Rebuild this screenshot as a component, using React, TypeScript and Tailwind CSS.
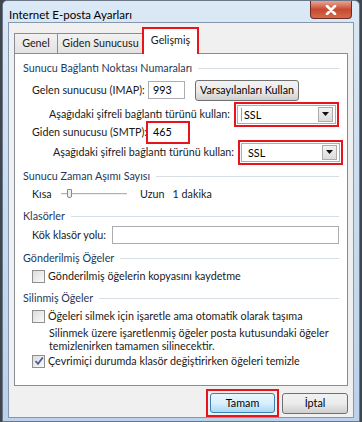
import React from 'react';

const font = "font-['Lato','Open_Sans',sans-serif]";

function Section({ title, children }: { title: string; children?: React.ReactNode }) {
  return (
    <div className="flex flex-col">
      <div className="flex items-center gap-1.5 h-[16px]">
        <span className="text-[#1e395b] whitespace-nowrap">{title}</span>
        <div className="flex-1 h-px bg-[#d5dfe5]" />
      </div>
      {children}
    </div>
  );
}

function Checkbox({ checked = false }: { checked?: boolean }) {
  return (
    <div className="w-[13px] h-[13px] shrink-0 border border-[#8f8f8f] bg-gradient-to-br from-[#dcdcdc] to-[#fbfbfb] flex items-center justify-center">
      {checked && (
        <svg width="10" height="10" viewBox="0 0 10 10">
          <path d="M1.5 5 L4 7.8 L8.8 1.5" fill="none" stroke="#4a5f97" strokeWidth="1.8" />
        </svg>
      )}
    </div>
  );
}

function Select({ value, caret = false }: { value: string; caret?: boolean }) {
  return (
    <div className="border-2 border-[#e8141b] p-[1px]">
      <div className="w-[99px] h-[19px] border border-[#abadb3] bg-white flex items-center justify-between pl-[3px] pr-[2px]">
        <span className={`text-black pl-[2px] leading-[13px] border-l ${caret ? 'border-[#7aa7d6]' : 'border-transparent'}`}>{value}</span>
        <div className="w-[15px] h-[15px] border border-[#acacac] bg-gradient-to-b from-[#f2f2f2] to-[#dcdcdc] flex items-center justify-center">
          <svg width="7" height="4" viewBox="0 0 7 4"><path d="M0 0 H7 L3.5 4 Z" fill="#111" /></svg>
        </div>
      </div>
    </div>
  );
}

export default function App() {
  return (
    <div className={`w-[362px] h-[422px] bg-[#3e4650] pl-[2px] text-[10.75px] text-[#1a1a1a] whitespace-nowrap ${font}`}>
      <div className="w-[358px] h-[422px] border border-[#6b7686] rounded-t-[5px] bg-gradient-to-b from-[#dbe8f5] via-[#c9dbef] to-[#bcd1ea] flex flex-col px-[5px] pb-[6px]">
        {/* Title bar */}
        <div className="h-[21px] flex items-start justify-between shrink-0">
          <span className="text-[11.5px] text-black pt-[7px] pl-[1px] leading-[13px]">Internet E-posta Ayarları</span>
          <div className="w-[42px] h-[18px] mr-[2px] rounded-b-[4px] border border-[#6b2d25] border-t-0 bg-gradient-to-b from-[#e8a494] via-[#c8492f] to-[#d36a4a] flex items-center justify-center">
            <svg width="12" height="10" viewBox="0 0 12 10">
              <path d="M2 1 L10 9 M10 1 L2 9" stroke="#fff" strokeWidth="2.6" strokeLinecap="round" />
            </svg>
          </div>
        </div>

        {/* Client area */}
        <div className="flex-1 border border-[#8497ae] bg-[#f0f0f0] flex flex-col px-[5px] pt-[6px]">
          {/* Tabs */}
          <div className="flex items-end h-[24px] relative z-10">
            <div className="h-[20px] w-[44px] justify-center border border-[#898c95] border-b-0 bg-gradient-to-b from-[#f2f2f2] to-[#e3e3e3] flex items-center">Genel</div>
            <div className="h-[20px] w-[86px] justify-center border border-[#898c95] border-b-0 border-l-0 bg-gradient-to-b from-[#f2f2f2] to-[#e3e3e3] flex items-center">Giden Sunucusu</div>
            <div className="h-[27px] w-[57px] justify-center -mb-[1px] -ml-[2px] border-2 border-[#e8141b] border-b-0 bg-white flex items-start pt-[3px]">
              <span>Gelişmiş</span>
            </div>
          </div>

          {/* Panel */}
          <div className="h-[333px] border border-[#898c95] bg-white flex flex-col gap-[4px] pl-[8px] pr-[8px] pt-[6px]">
            <Section title="Sunucu Bağlantı Noktası Numaraları">
              <div className="flex items-center h-[22px] mt-[3px] pl-[9px]">
                <span className="w-[116px]">Gelen sunucusu (IMAP):</span>
                <div className="w-[37px] h-[18px] border border-[#abadb3] bg-white flex items-center px-[4px] text-black">993</div>
                <div className="ml-[10px] h-[21px] w-[104px] justify-center border border-[#707070] rounded-[3px] bg-gradient-to-b from-[#f2f2f2] via-[#ebebeb] to-[#cfcfcf] flex items-center text-black">Varsayılanları Kullan</div>
              </div>
              <div className="flex items-center justify-end h-[24px] mt-[1px] gap-[4px]">
                <span>Aşağıdaki şifreli bağlantı türünü kullan:</span>
                <Select value="SSL" caret />
              </div>
              <div className="flex items-center h-[20px] pl-[9px] -mt-[4px]">
                <span className="w-[114px]">Giden sunucusu (SMTP):</span>
                <div className="border-2 border-[#e8141b] p-[2px]">
                  <div className="w-[36px] h-[15px] bg-white flex items-center px-[3px] text-black">465</div>
                </div>
              </div>
              <div className="flex items-center justify-end h-[24px] -mt-[2px] gap-[4px] mr-[-4px]">
                <span>Aşağıdaki şifreli bağlantı türünü kullan:</span>
                <Select value="SSL" />
              </div>
            </Section>

            <Section title="Sunucu Zaman Aşımı Sayısı">
              <div className="flex items-center h-[20px] pl-[9px]">
                <span className="w-[29px]">Kısa</span>
                <div className="relative w-[66px] h-[10px] flex items-center">
                  <div className="w-full h-[2px] border-t border-[#b0b0b0] border-b border-b-[#f0f0f0] bg-[#e0e0e0]" />
                  <div className="absolute left-[6px] top-0 w-[5px] h-[9px] border border-[#8a8a8a] rounded-b-[2px] bg-[#f0f0f0]" />
                </div>
                <span className="ml-[13px]">Uzun</span>
                <span className="ml-[8px]">1 dakika</span>
              </div>
            </Section>

            <Section title="Klasörler">
              <div className="flex items-center h-[22px] pl-[9px]">
                <span className="w-[80px]">Kök klasör yolu:</span>
                <div className="flex-1 h-[18px] border border-[#abadb3] bg-white" />
              </div>
            </Section>

            <Section title="Gönderilmiş Öğeler">
              <div className="flex items-center gap-[3px] h-[20px] pl-[9px]">
                <Checkbox />
                <span>Gönderilmiş öğelerin kopyasını kaydetme</span>
              </div>
            </Section>

            <Section title="Silinmiş Öğeler">
              <div className="flex items-center gap-[3px] h-[20px] pl-[9px]">
                <Checkbox />
                <span>Öğeleri silmek için işaretle ama otomatik olarak taşıma</span>
              </div>
              <div className="pl-[26px] leading-[13px]">
                Silinmek üzere işaretlenmiş öğeler posta kutusundaki öğeler<br />temizlenirken tamamen silinecektir.
              </div>
              <div className="flex items-center gap-[3px] h-[20px] pl-[9px] -mt-[1px]">
                <Checkbox checked />
                <span>Çevrimiçi durumda klasör değiştirirken öğeleri temizle</span>
              </div>
            </Section>
          </div>

          {/* Buttons */}
          <div className="flex justify-end items-center gap-[3px] pt-[3px]">
            <div className="border-2 border-[#e8141b] p-[2px]">
              <div className="w-[65px] h-[20px] border border-[#3c7fb1] rounded-[3px] bg-gradient-to-b from-[#eaf6fd] via-[#d9f0fc] to-[#a7d9f5] flex items-center justify-center text-black">Tamam</div>
            </div>
            <div className="w-[66px] h-[21px] border border-[#707070] rounded-[3px] bg-gradient-to-b from-[#f2f2f2] via-[#ebebeb] to-[#cfcfcf] flex items-center justify-center text-black">İptal</div>
          </div>
        </div>
      </div>
    </div>
  );
}
